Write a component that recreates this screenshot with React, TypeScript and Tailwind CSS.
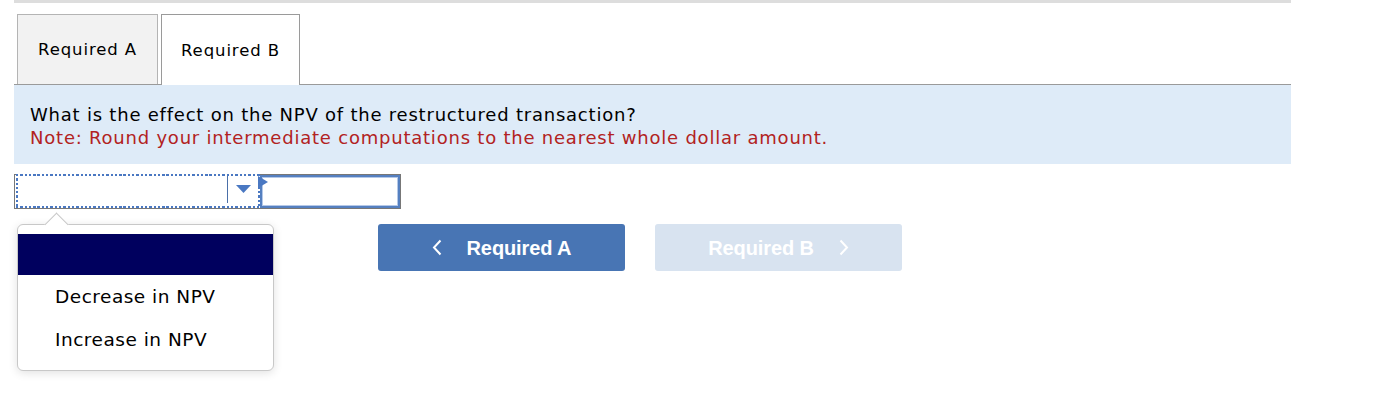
import React from "react";

export default function App() {
  const verdana = { fontFamily: '"DejaVu Sans", Verdana, sans-serif' };
  return (
    <div className="relative w-[1394px] h-[414px] bg-white overflow-hidden" style={verdana}>
      <div className="ml-[14px] w-[1277px]">
        <div className="h-[3px] bg-[#dddddd]" />
        {/* tabs */}
        <div className="mt-[11px] flex h-[71px] border-b border-[#9a9a9a] pl-[3px] gap-[3px]">
          <div className="w-[141px] h-[70px] border border-b-0 border-[#b4b4b4] bg-[#f2f2f2] flex items-center justify-center pt-[2px] text-[16.5px] tracking-[0.9px] text-black">
            Required A
          </div>
          <div className="w-[139px] h-[71px] mb-[-1px] border border-b-0 border-[#9a9a9a] bg-white flex items-center justify-center pt-[2px] text-[16.5px] tracking-[0.9px] text-black">
            Required B
          </div>
        </div>
        {/* question panel */}
        <div className="h-[79px] bg-[#deebf8] pl-[16px] pt-[18px] text-[18px] tracking-[0.78px] leading-[23px]">
          <div className="text-black">What is the effect on the NPV of the restructured transaction?</div>
          <div className="text-[#b22222]">Note: Round your intermediate computations to the nearest whole dollar amount.</div>
        </div>
        {/* dropdown + input */}
        <div className="mt-[10px] relative flex w-[387px] h-[35px] border border-[#777777]">
          <div className="relative w-[244px] h-[34px] -mt-[1px] ml-[1px] bg-white">
            <div className="absolute left-0 right-0 top-0 h-[2px] bg-[repeating-linear-gradient(90deg,#4a78c2_0_2.3px,transparent_2.3px_4.3px)]" />
            <div className="absolute left-0 right-0 bottom-0 h-[2px] bg-[repeating-linear-gradient(90deg,#4a78c2_0_2.3px,transparent_2.3px_4.3px)]" />
            <div className="absolute left-0 top-0 bottom-0 w-[2px] bg-[repeating-linear-gradient(180deg,#4a78c2_0_2.3px,transparent_2.3px_4.3px)]" />
            <div className="absolute right-0 top-0 bottom-0 w-[2px] bg-[repeating-linear-gradient(180deg,#4a78c2_0_2.3px,transparent_2.3px_4.3px)]" />
            <div className="absolute left-[211px] top-[2px] w-[1px] h-[27px] bg-[#4a6fa8]" />
            <svg className="absolute left-[220px] top-[11px]" width="15" height="8" viewBox="0 0 15 8">
              <path d="M0 0 L15 0 L7.5 8 Z" fill="#4a78c2" />
            </svg>
          </div>
          <div className="flex-1 h-[33px] border-2 border-[#5580c0] shadow-[inset_0_0_0_1px_#b4c8e8] bg-white" />
          <svg className="absolute left-[243px] top-[1px]" width="10" height="12" viewBox="0 0 10 12">
            <path d="M0 0 L10 6 L0 12 Z" fill="#4a78c2" />
          </svg>
        </div>
        {/* nav buttons */}
        <div className="mt-[15px] flex gap-[30px] pl-[364px]" style={{ fontFamily: '"Liberation Sans", Arial, sans-serif' }}>
          <div className="w-[247px] h-[47px] rounded-[3px] bg-[#4875b4] flex items-center justify-center text-white text-[20px] font-bold tracking-[-0.1px]">
            <svg className="mr-[25px]" width="10" height="17" viewBox="0 0 10 17">
              <path d="M8.5 1.5 L2 8.5 L8.5 15.5" fill="none" stroke="white" strokeWidth="2" />
            </svg>
            <span>Required A</span>
          </div>
          <div className="w-[247px] h-[47px] rounded-[3px] bg-[#d8e3f0] flex items-center justify-center text-white text-[20px] font-bold tracking-[-0.1px]">
            <span>Required B</span>
            <svg className="ml-[25px]" width="10" height="17" viewBox="0 0 10 17">
              <path d="M1.5 1.5 L8 8.5 L1.5 15.5" fill="none" stroke="white" strokeWidth="2" />
            </svg>
          </div>
        </div>
      </div>
      {/* popup */}
      <div className="absolute left-[17px] top-[224px] w-[257px] h-[147px] rounded-[6px] border border-[#c8c8c8] bg-white shadow-[0_2px_10px_rgba(0,0,0,0.12)]">
        <div className="absolute left-[30px] -top-[9px] w-[17px] h-[17px] rotate-45 bg-white border-t border-l border-[#c8c8c8]" />
        <div className="relative mt-[9px] h-[41px] bg-[#00005e]" />
        <div className="relative h-[44px] flex items-center pl-[37px] text-[18.5px] tracking-[0.5px] text-black">Decrease in NPV</div>
        <div className="relative h-[41px] flex items-center pl-[37px] text-[18.5px] tracking-[0.5px] text-black">Increase in NPV</div>
      </div>
    </div>
  );
}
